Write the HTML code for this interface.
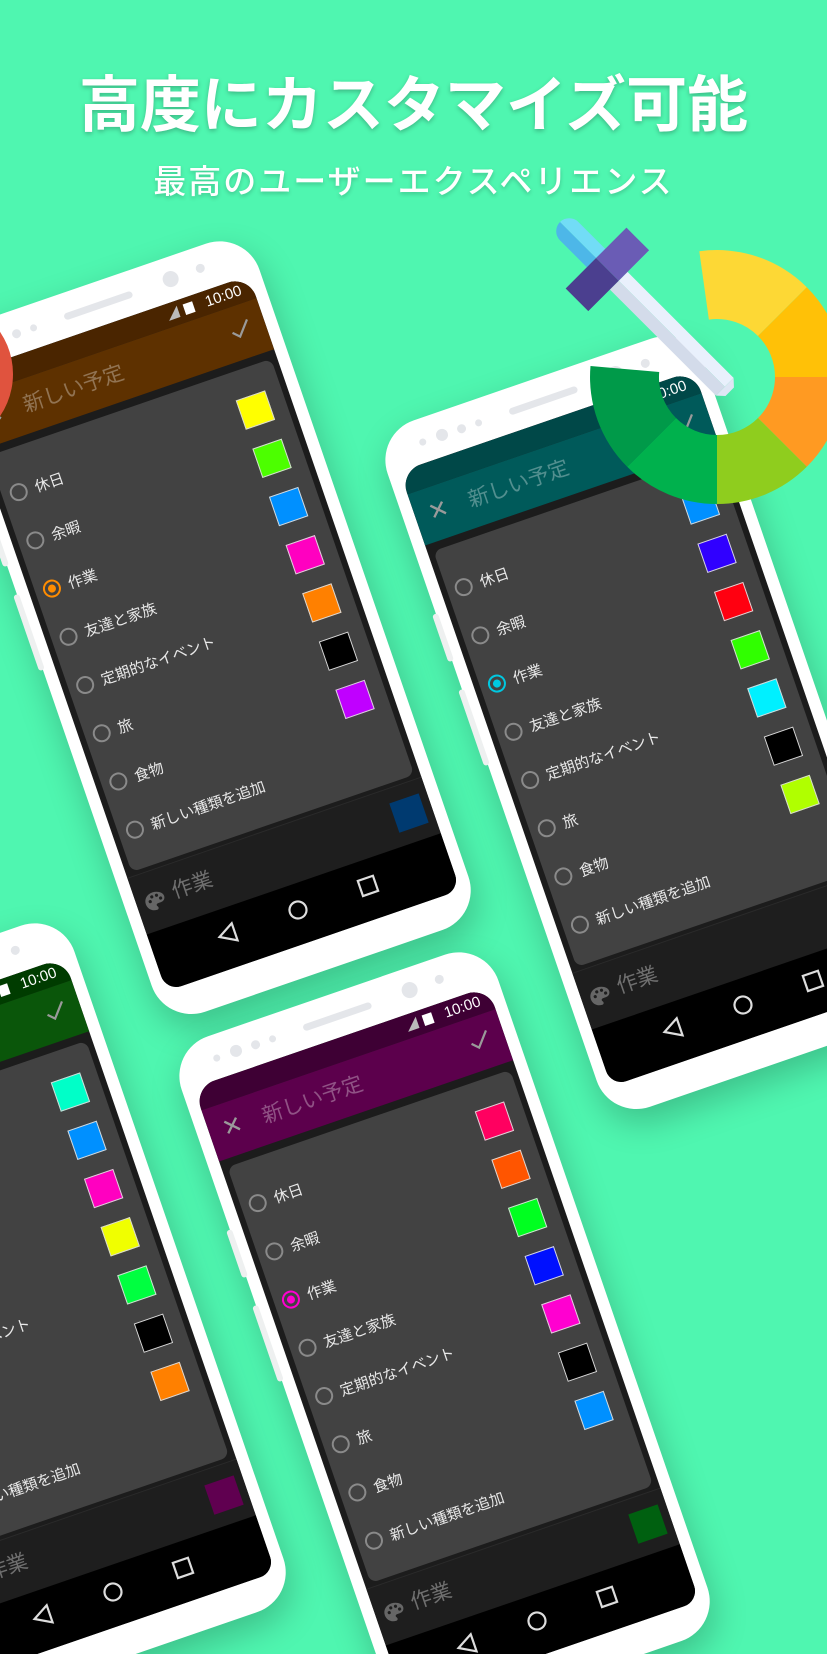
<!DOCTYPE html>
<html><head><meta charset="utf-8">
<style>
*{margin:0;padding:0;box-sizing:border-box}
html,body{width:827px;height:1654px;overflow:hidden}
body{background:#4ff6b0;position:relative;font-family:"Liberation Sans","Noto Sans CJK JP",sans-serif}
.h1{position:absolute;left:0;width:827px;top:72px;text-align:center;color:#fff;font-size:61px;line-height:66px;font-weight:700;text-shadow:0 2px 5px rgba(0,0,0,.25)}
.h2{position:absolute;left:0;width:827px;top:162px;text-align:center;color:#fff;font-size:33px;line-height:40px;letter-spacing:2px;font-weight:500;text-shadow:0 2px 4px rgba(0,0,0,.2)}
.ph{position:absolute;width:335px;height:726px;background:#fff;border-radius:42px;transform-origin:0 0;transform:rotate(-19deg);box-shadow:0 14px 34px rgba(0,0,0,.22)}
.btn{position:absolute;left:-4px;width:6px;background:#eef0f0;border-radius:3px}
.pill{position:absolute;left:135px;top:20px;width:72px;height:7px;border-radius:4px;background:#e4e6ea}
.dot{position:absolute;border-radius:50%;background:#e4e6ea}
.sc{position:absolute;left:12px;top:44px;width:311px;height:650px;background:#1c1c1c;border-radius:22px 22px 16px 16px;overflow:hidden}
.sb{position:absolute;left:0;right:0;top:0;height:24px}
.tm{position:absolute;right:12px;top:3px;color:#fff;font-size:15px;line-height:18px}
.bat{position:absolute;right:62px;top:6px;width:10px;height:11px;background:#fff}
.sig{position:absolute;right:78px;top:5px;width:0;height:0;border-left:12px solid transparent;border-bottom:12px solid #bbb}
.tb{position:absolute;left:0;right:0;top:24px;height:54px}
.x{position:absolute;left:14px;top:12px;color:#9a9a9a;font-size:24px;line-height:28px}
.tt{position:absolute;left:56px;top:13px;color:rgba(255,255,255,.32);font-size:21px;line-height:28px}
.ck{position:absolute;right:14px;top:14px}
.card{position:absolute;left:6px;right:6px;top:86px;height:440px;background:#424242;border-radius:8px}
.it{position:absolute;left:14px;height:24px;display:flex;align-items:center;color:#e8e8e8;font-size:15px;white-space:nowrap}
.rd{width:18px;height:18px;border:2px solid #8a8a8a;border-radius:50%;margin-right:8px;position:relative}
.rd.on:after{content:"";position:absolute;left:3px;top:3px;width:8px;height:8px;border-radius:50%;background:currentColor}
.sq{position:absolute;left:258px;width:31px;height:31px;border:1.5px solid #d8d8d8}
.bb{position:absolute;left:0;right:0;top:530px;height:60px;background:#1e1e1e;border-top:1px solid #2a2a2a}
.pal{position:absolute;left:8px;top:20px}
.zw{position:absolute;left:38px;top:14px;color:#6f6f6f;font-size:21px;line-height:28px}
.bsq{position:absolute;left:272px;top:14px;width:31px;height:31px}
.nav{position:absolute;left:0;right:0;top:590px;height:60px;background:#000}
.r0{top:118px}.r1{top:169px}.r2{top:220px}.r3{top:271px}.r4{top:322px}.r5{top:373px}.r6{top:424px}.r7{top:475px}
.s0{top:114px}.s1{top:165px}.s2{top:216px}.s3{top:267px}.s4{top:318px}.s5{top:369px}.s6{top:420px}
</style></head><body>

<div class="h1">高度にカスタマイズ可能</div>
<div class="h2">最高のユーザーエクスペリエンス</div>

<!-- PHONE 1 brown -->
<div class="ph" style="left:-71px;top:339px">
<div class="btn" style="top:190px;height:50px"></div><div class="btn" style="top:270px;height:80px"></div>
<div class="pill"></div>
<div class="dot" style="left:40px;top:20px;width:7px;height:7px"></div><div class="dot" style="left:58px;top:17px;width:12px;height:12px"></div><div class="dot" style="left:80px;top:19px;width:9px;height:9px"></div><div class="dot" style="left:99px;top:20px;width:7px;height:7px"></div>
<div class="dot" style="left:240px;top:14px;width:16px;height:16px"></div><div class="dot" style="left:275px;top:17px;width:9px;height:9px"></div>
<div class="sc">
 <div class="sb" style="background:#4a2500"><div class="sig"></div><div class="bat"></div><div class="tm">10:00</div></div>
 <div class="tb" style="background:#5e3100"><div class="x">✕</div><div class="tt">新しい予定</div>
  <svg class="ck" width="22" height="20" viewBox="0 0 22 20"><path d="M2 11l6 6L20 3" fill="none" stroke="#9a9a9a" stroke-width="2.2"/></svg></div>
 <div class="card"></div>
 <div class="it r0"><div class="rd"></div>休日</div>
 <div class="it r1"><div class="rd"></div>余暇</div>
 <div class="it r2"><div class="rd on" style="border-color:#ff8c00;color:#ff8c00"></div>作業</div>
 <div class="it r3"><div class="rd"></div>友達と家族</div>
 <div class="it r4"><div class="rd"></div>定期的なイベント</div>
 <div class="it r5"><div class="rd"></div>旅</div>
 <div class="it r6"><div class="rd"></div>食物</div>
 <div class="it r7"><div class="rd"></div>新しい種類を追加</div>
 <div class="sq s0" style="background:#ffff00"></div><div class="sq s1" style="background:#4cff00"></div><div class="sq s2" style="background:#0090ff"></div><div class="sq s3" style="background:#ff00c0"></div><div class="sq s4" style="background:#ff8000"></div><div class="sq s5" style="background:#000"></div><div class="sq s6" style="background:#c000ff"></div>
 <div class="bb"><svg class="pal" width="22" height="20" viewBox="0 0 22 20"><path d="M11 1C5 1 1 5 1 10s4 9 9 9c1.5 0 2-1 2-2s-1-1.5-1-2.5 1-1.5 2-1.5h3c3 0 5-2 5-5C21 4 16 1 11 1z" fill="#666"/><circle cx="6" cy="9" r="1.6" fill="#1e1e1e"/><circle cx="9" cy="5" r="1.6" fill="#1e1e1e"/><circle cx="14" cy="5" r="1.6" fill="#1e1e1e"/><circle cx="17" cy="9" r="1.6" fill="#1e1e1e"/></svg><div class="zw">作業</div><div class="bsq" style="background:#003a70"></div></div>
 <div class="nav"><svg width="311" height="60"><path d="M84 17L68 26l16 9z" fill="none" stroke="#ddd" stroke-width="2.2"/><circle cx="151" cy="26" r="8.5" fill="none" stroke="#ddd" stroke-width="2.2"/><rect x="217" y="18" width="16" height="16" fill="none" stroke="#ddd" stroke-width="2.2"/></svg></div>
</div></div>

<div style="position:absolute;left:-137px;top:299px;width:150px;height:150px;border-radius:50%;background:#e0533e"></div>

<!-- PHONE 3 teal -->
<div class="ph" style="left:374px;top:434px">
<div class="btn" style="top:190px;height:50px"></div><div class="btn" style="top:270px;height:80px"></div>
<div class="pill"></div>
<div class="dot" style="left:40px;top:20px;width:7px;height:7px"></div><div class="dot" style="left:58px;top:17px;width:12px;height:12px"></div><div class="dot" style="left:80px;top:19px;width:9px;height:9px"></div><div class="dot" style="left:99px;top:20px;width:7px;height:7px"></div>
<div class="dot" style="left:240px;top:14px;width:16px;height:16px"></div><div class="dot" style="left:275px;top:17px;width:9px;height:9px"></div>
<div class="sc">
 <div class="sb" style="background:#004848"><div class="sig"></div><div class="bat"></div><div class="tm">10:00</div></div>
 <div class="tb" style="background:#005a5a"><div class="x">✕</div><div class="tt">新しい予定</div>
  <svg class="ck" width="22" height="20" viewBox="0 0 22 20"><path d="M2 11l6 6L20 3" fill="none" stroke="#9a9a9a" stroke-width="2.2"/></svg></div>
 <div class="card"></div>
 <div class="it r0"><div class="rd"></div>休日</div>
 <div class="it r1"><div class="rd"></div>余暇</div>
 <div class="it r2"><div class="rd on" style="border-color:#00c8e0;color:#00c8e0"></div>作業</div>
 <div class="it r3"><div class="rd"></div>友達と家族</div>
 <div class="it r4"><div class="rd"></div>定期的なイベント</div>
 <div class="it r5"><div class="rd"></div>旅</div>
 <div class="it r6"><div class="rd"></div>食物</div>
 <div class="it r7"><div class="rd"></div>新しい種類を追加</div>
 <div class="sq s0" style="background:#0090ff"></div><div class="sq s1" style="background:#3000ff"></div><div class="sq s2" style="background:#ff0010"></div><div class="sq s3" style="background:#30ff00"></div><div class="sq s4" style="background:#00f0ff"></div><div class="sq s5" style="background:#000"></div><div class="sq s6" style="background:#b0ff00"></div>
 <div class="bb"><svg class="pal" width="22" height="20" viewBox="0 0 22 20"><path d="M11 1C5 1 1 5 1 10s4 9 9 9c1.5 0 2-1 2-2s-1-1.5-1-2.5 1-1.5 2-1.5h3c3 0 5-2 5-5C21 4 16 1 11 1z" fill="#666"/><circle cx="6" cy="9" r="1.6" fill="#1e1e1e"/><circle cx="9" cy="5" r="1.6" fill="#1e1e1e"/><circle cx="14" cy="5" r="1.6" fill="#1e1e1e"/><circle cx="17" cy="9" r="1.6" fill="#1e1e1e"/></svg><div class="zw">作業</div><div class="bsq" style="background:#b00000"></div></div>
 <div class="nav"><svg width="311" height="60"><path d="M84 17L68 26l16 9z" fill="none" stroke="#ddd" stroke-width="2.2"/><circle cx="151" cy="26" r="8.5" fill="none" stroke="#ddd" stroke-width="2.2"/><rect x="217" y="18" width="16" height="16" fill="none" stroke="#ddd" stroke-width="2.2"/></svg></div>
</div></div>

<!-- PHONE 2 green -->
<div class="ph" style="left:-256px;top:1021px">
<div class="pill"></div>
<div class="dot" style="left:240px;top:14px;width:16px;height:16px"></div><div class="dot" style="left:275px;top:17px;width:9px;height:9px"></div>
<div class="sc">
 <div class="sb" style="background:#003c00"><div class="sig"></div><div class="bat"></div><div class="tm">10:00</div></div>
 <div class="tb" style="background:#0a560a"><div class="x">✕</div><div class="tt">新しい予定</div>
  <svg class="ck" width="22" height="20" viewBox="0 0 22 20"><path d="M2 11l6 6L20 3" fill="none" stroke="#9a9a9a" stroke-width="2.2"/></svg></div>
 <div class="card"></div>
 <div class="it r0"><div class="rd"></div>休日</div>
 <div class="it r1"><div class="rd"></div>余暇</div>
 <div class="it r2"><div class="rd on" style="border-color:#00e040;color:#00e040"></div>作業</div>
 <div class="it r3"><div class="rd"></div>友達と家族</div>
 <div class="it r4"><div class="rd"></div>定期的なイベント</div>
 <div class="it r5"><div class="rd"></div>旅</div>
 <div class="it r6"><div class="rd"></div>食物</div>
 <div class="it r7"><div class="rd"></div>新しい種類を追加</div>
 <div class="sq s0" style="background:#00ffc8"></div><div class="sq s1" style="background:#0090ff"></div><div class="sq s2" style="background:#ff00c0"></div><div class="sq s3" style="background:#f0ff00"></div><div class="sq s4" style="background:#00ff40"></div><div class="sq s5" style="background:#000"></div><div class="sq s6" style="background:#ff8000"></div>
 <div class="bb"><svg class="pal" width="22" height="20" viewBox="0 0 22 20"><path d="M11 1C5 1 1 5 1 10s4 9 9 9c1.5 0 2-1 2-2s-1-1.5-1-2.5 1-1.5 2-1.5h3c3 0 5-2 5-5C21 4 16 1 11 1z" fill="#666"/></svg><div class="zw">作業</div><div class="bsq" style="background:#600050"></div></div>
 <div class="nav"><svg width="311" height="60"><path d="M84 17L68 26l16 9z" fill="none" stroke="#ddd" stroke-width="2.2"/><circle cx="151" cy="26" r="8.5" fill="none" stroke="#ddd" stroke-width="2.2"/><rect x="217" y="18" width="16" height="16" fill="none" stroke="#ddd" stroke-width="2.2"/></svg></div>
</div></div>

<!-- PHONE 4 purple -->
<div class="ph" style="left:168px;top:1050px">
<div class="btn" style="top:190px;height:50px"></div><div class="btn" style="top:270px;height:80px"></div>
<div class="pill"></div>
<div class="dot" style="left:40px;top:20px;width:7px;height:7px"></div><div class="dot" style="left:58px;top:17px;width:12px;height:12px"></div><div class="dot" style="left:80px;top:19px;width:9px;height:9px"></div><div class="dot" style="left:99px;top:20px;width:7px;height:7px"></div>
<div class="dot" style="left:240px;top:14px;width:16px;height:16px"></div><div class="dot" style="left:275px;top:17px;width:9px;height:9px"></div>
<div class="sc">
 <div class="sb" style="background:#3e0034"><div class="sig"></div><div class="bat"></div><div class="tm">10:00</div></div>
 <div class="tb" style="background:#5c004c"><div class="x">✕</div><div class="tt">新しい予定</div>
  <svg class="ck" width="22" height="20" viewBox="0 0 22 20"><path d="M2 11l6 6L20 3" fill="none" stroke="#9a9a9a" stroke-width="2.2"/></svg></div>
 <div class="card"></div>
 <div class="it r0"><div class="rd"></div>休日</div>
 <div class="it r1"><div class="rd"></div>余暇</div>
 <div class="it r2"><div class="rd on" style="border-color:#ff00d0;color:#ff00d0"></div>作業</div>
 <div class="it r3"><div class="rd"></div>友達と家族</div>
 <div class="it r4"><div class="rd"></div>定期的なイベント</div>
 <div class="it r5"><div class="rd"></div>旅</div>
 <div class="it r6"><div class="rd"></div>食物</div>
 <div class="it r7"><div class="rd"></div>新しい種類を追加</div>
 <div class="sq s0" style="background:#ff0060"></div><div class="sq s1" style="background:#ff5500"></div><div class="sq s2" style="background:#00ff20"></div><div class="sq s3" style="background:#0010ff"></div><div class="sq s4" style="background:#ff00d0"></div><div class="sq s5" style="background:#000"></div><div class="sq s6" style="background:#0090ff"></div>
 <div class="bb"><svg class="pal" width="22" height="20" viewBox="0 0 22 20"><path d="M11 1C5 1 1 5 1 10s4 9 9 9c1.5 0 2-1 2-2s-1-1.5-1-2.5 1-1.5 2-1.5h3c3 0 5-2 5-5C21 4 16 1 11 1z" fill="#666"/><circle cx="6" cy="9" r="1.6" fill="#1e1e1e"/><circle cx="9" cy="5" r="1.6" fill="#1e1e1e"/><circle cx="14" cy="5" r="1.6" fill="#1e1e1e"/><circle cx="17" cy="9" r="1.6" fill="#1e1e1e"/></svg><div class="zw">作業</div><div class="bsq" style="background:#006010"></div></div>
 <div class="nav"><svg width="311" height="60"><path d="M84 17L68 26l16 9z" fill="none" stroke="#ddd" stroke-width="2.2"/><circle cx="151" cy="26" r="8.5" fill="none" stroke="#ddd" stroke-width="2.2"/><rect x="217" y="18" width="16" height="16" fill="none" stroke="#ddd" stroke-width="2.2"/></svg></div>
</div></div>

<!-- colour wheel + pen -->
<svg style="position:absolute;left:0;top:0" width="827" height="560" viewBox="0 0 827 560">
<path d="M699.3 251.3A127 127 0 0 1 806.8 287.2L758 336A58 58 0 0 0 708.9 319.6Z" fill="#fdd835"/>
<path d="M806.8 287.2A127 127 0 0 1 844 377L775 377A58 58 0 0 0 758 336Z" fill="#ffc107"/>
<path d="M844 377A127 127 0 0 1 806.8 466.8L758 418A58 58 0 0 0 775 377Z" fill="#ff9a22"/>
<path d="M806.8 466.8A127 127 0 0 1 717 504L717 435A58 58 0 0 0 758 418Z" fill="#8fcd1e"/>
<path d="M717 504A127 127 0 0 1 627.2 466.8L676 418A58 58 0 0 0 717 435Z" fill="#00b14d"/>
<path d="M627.2 466.8A127 127 0 0 1 590.5 366L659.2 372A58 58 0 0 0 676 418Z" fill="#009a49"/>
<g transform="translate(560 222) rotate(45)">
 <path d="M13 -13H51V0H0A13 13 0 0 1 13 -13Z" fill="#72dcf6"/>
 <path d="M0 0H51V13H13A13 13 0 0 1 0 0Z" fill="#4db7e8"/>
 <rect x="83" y="-12.5" width="150" height="12.5" fill="#e9f0fc"/>
 <rect x="83" y="0" width="150" height="12.5" fill="#d3dbea"/>
 <path d="M233 -12.5L240 -6L240 6L233 12.5Z" fill="#dfe6f4"/>
 <rect x="51" y="-43" width="32" height="43" fill="#6a5cb5"/>
 <rect x="51" y="0" width="32" height="43" fill="#4b3f8f"/>
</g>
</svg>
</body></html>
